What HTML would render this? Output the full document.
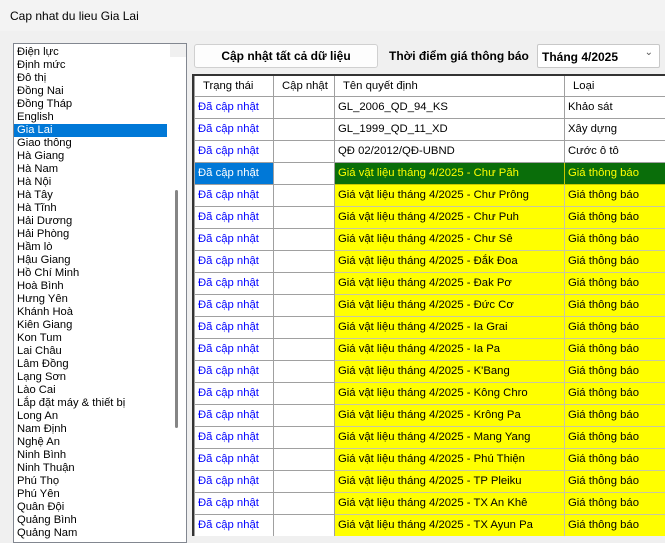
<!DOCTYPE html>
<html><head><meta charset="utf-8"><style>
*{margin:0;padding:0;box-sizing:border-box}
body{width:665px;height:536px;overflow:hidden;background:#f0f0f0;font-family:"Liberation Sans",sans-serif;font-size:12px;position:relative;color:#000}
.title{position:absolute;left:0;top:0;width:665px;height:31px;background:#f3f3f3;padding:9px 0 0 10px;font-size:12px}
.list{position:absolute;left:13px;top:43px;width:174px;height:500px;background:#fff;border:1px solid #828790;overflow:hidden;padding-top:2px}
.list div{height:13px;line-height:13px;padding-left:3px;font-size:11.2px;width:153px;white-space:nowrap}
.list .sel{background:#0078d7;color:#fff}
.sb{position:absolute;left:156px;top:0;width:17px;height:500px;background:#f0f0f0}
.thumb{position:absolute;left:175px;top:190px;width:3px;height:238px;background:#858585;border-radius:2px}
.btn{position:absolute;left:194px;top:44px;width:184px;height:24px;background:#fdfdfd;border:1px solid #d0d0d0;border-radius:3px;font-weight:bold;text-align:center;line-height:22px;font-size:12px}
.lbl{position:absolute;left:389px;top:49px;font-weight:bold;font-size:12px}
.combo{position:absolute;left:537px;top:44px;width:123px;height:24px;background:#fff;border:1px solid #c8c8c8;border-radius:2px;font-weight:bold;font-size:12px;padding:5px 0 0 4px}
.combo span{position:absolute;right:6px;top:2px;font-weight:normal;color:#555;font-size:10px}
.grid{position:absolute;left:192px;top:74px;width:473px;height:462px;background:#fff;border-top:2px solid #333;border-left:2px solid #333;overflow:hidden}
table{border-collapse:collapse;table-layout:fixed;width:480px}
td{height:22px;border:1px solid #a0a0a0;padding:0 3px;white-space:nowrap;overflow:hidden;font-size:11.3px}
tr.h td{height:20px;border-top:none;padding-left:8px}
td.s{color:#0000ff}
tr.y td.n,tr.y td.l{background:#ffff00;border-color:#c8c8a0}
tr.g td.n,tr.g td.l{background:#0a6e0a;color:#ffff00;border-color:#c8c800}
tr.g td.s{background:#0078d7;color:#fff}
</style></head><body>
<div class="title">Cap nhat du lieu Gia Lai</div>
<div class="list">
<div>Điện lực</div><div>Định mức</div><div>Đô thị</div><div>Đồng Nai</div><div>Đồng Tháp</div><div>English</div><div class="sel">Gia Lai</div><div>Giao thông</div><div>Hà Giang</div><div>Hà Nam</div><div>Hà Nội</div><div>Hà Tây</div><div>Hà Tĩnh</div><div>Hải Dương</div><div>Hải Phòng</div><div>Hầm lò</div><div>Hậu Giang</div><div>Hồ Chí Minh</div><div>Hoà Bình</div><div>Hưng Yên</div><div>Khánh Hoà</div><div>Kiên Giang</div><div>Kon Tum</div><div>Lai Châu</div><div>Lâm Đồng</div><div>Lạng Sơn</div><div>Lào Cai</div><div>Lắp đặt máy &amp; thiết bị</div><div>Long An</div><div>Nam Định</div><div>Nghệ An</div><div>Ninh Bình</div><div>Ninh Thuận</div><div>Phú Thọ</div><div>Phú Yên</div><div>Quân Đội</div><div>Quảng Bình</div><div>Quảng Nam</div>
<div class="sb"></div>
</div>
<div class="thumb"></div>
<div class="btn">Cập nhật tất cả dữ liệu</div>
<div class="lbl">Thời điểm giá thông báo</div>
<div class="combo">Tháng 4/2025<span>&#8964;</span></div>
<div class="grid"><table>
<colgroup><col style="width:79px"><col style="width:61px"><col style="width:230px"><col style="width:110px"></colgroup>
<tr class="h"><td>Trạng thái</td><td>Cập nhật</td><td>Tên quyết định</td><td>Loại</td></tr>
<tr><td class="s">Đã cập nhật</td><td></td><td>GL_2006_QD_94_KS</td><td>Khảo sát</td></tr>
<tr><td class="s">Đã cập nhật</td><td></td><td>GL_1999_QD_11_XD</td><td>Xây dựng</td></tr>
<tr><td class="s">Đã cập nhật</td><td></td><td>QĐ 02/2012/QĐ-UBND</td><td>Cước ô tô</td></tr>
<tr class="g"><td class="s">Đã cập nhật</td><td></td><td class="n">Giá vật liệu tháng 4/2025 - Chư Păh</td><td class="l">Giá thông báo</td></tr>
<tr class="y"><td class="s">Đã cập nhật</td><td></td><td class="n">Giá vật liệu tháng 4/2025 - Chư Prông</td><td class="l">Giá thông báo</td></tr>
<tr class="y"><td class="s">Đã cập nhật</td><td></td><td class="n">Giá vật liệu tháng 4/2025 - Chư Puh</td><td class="l">Giá thông báo</td></tr>
<tr class="y"><td class="s">Đã cập nhật</td><td></td><td class="n">Giá vật liệu tháng 4/2025 - Chư Sê</td><td class="l">Giá thông báo</td></tr>
<tr class="y"><td class="s">Đã cập nhật</td><td></td><td class="n">Giá vật liệu tháng 4/2025 - Đắk Đoa</td><td class="l">Giá thông báo</td></tr>
<tr class="y"><td class="s">Đã cập nhật</td><td></td><td class="n">Giá vật liệu tháng 4/2025 - Đak Pơ</td><td class="l">Giá thông báo</td></tr>
<tr class="y"><td class="s">Đã cập nhật</td><td></td><td class="n">Giá vật liệu tháng 4/2025 - Đức Cơ</td><td class="l">Giá thông báo</td></tr>
<tr class="y"><td class="s">Đã cập nhật</td><td></td><td class="n">Giá vật liệu tháng 4/2025 - Ia Grai</td><td class="l">Giá thông báo</td></tr>
<tr class="y"><td class="s">Đã cập nhật</td><td></td><td class="n">Giá vật liệu tháng 4/2025 - Ia Pa</td><td class="l">Giá thông báo</td></tr>
<tr class="y"><td class="s">Đã cập nhật</td><td></td><td class="n">Giá vật liệu tháng 4/2025 - K'Bang</td><td class="l">Giá thông báo</td></tr>
<tr class="y"><td class="s">Đã cập nhật</td><td></td><td class="n">Giá vật liệu tháng 4/2025 - Kông Chro</td><td class="l">Giá thông báo</td></tr>
<tr class="y"><td class="s">Đã cập nhật</td><td></td><td class="n">Giá vật liệu tháng 4/2025 - Krông Pa</td><td class="l">Giá thông báo</td></tr>
<tr class="y"><td class="s">Đã cập nhật</td><td></td><td class="n">Giá vật liệu tháng 4/2025 - Mang Yang</td><td class="l">Giá thông báo</td></tr>
<tr class="y"><td class="s">Đã cập nhật</td><td></td><td class="n">Giá vật liệu tháng 4/2025 - Phú Thiện</td><td class="l">Giá thông báo</td></tr>
<tr class="y"><td class="s">Đã cập nhật</td><td></td><td class="n">Giá vật liệu tháng 4/2025 - TP Pleiku</td><td class="l">Giá thông báo</td></tr>
<tr class="y"><td class="s">Đã cập nhật</td><td></td><td class="n">Giá vật liệu tháng 4/2025 - TX An Khê</td><td class="l">Giá thông báo</td></tr>
<tr class="y"><td class="s">Đã cập nhật</td><td></td><td class="n">Giá vật liệu tháng 4/2025 - TX Ayun Pa</td><td class="l">Giá thông báo</td></tr>
</table></div>
</body></html>
